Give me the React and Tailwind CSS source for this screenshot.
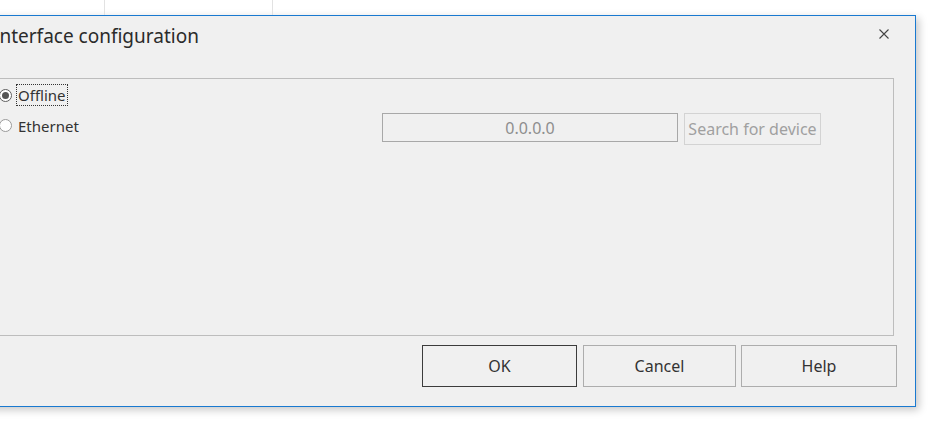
// Interface configuration dialog — Windows-style modal, partly off the left edge
import React, { useState } from "react";

const Radio = ({ checked }) => (
  <span
    className={`flex h-[13px] w-[13px] flex-none items-center justify-center rounded-full border bg-white ${
      checked ? "border-[#5f5f5f]" : "border-[#9a9a9a]"
    }`}
  >
    {checked && <span className="h-[7px] w-[7px] rounded-full bg-[#555555]" />}
  </span>
);

const DialogButton = ({ label, className, primary }) => (
  <button
    className={`flex h-[42px] items-center justify-center border bg-[#f0f0f0] text-[16px] text-[#333333] ${className} ${
      primary ? "border-[#3c3c3c]" : "border-[#adadad]"
    }`}
  >
    {label}
  </button>
);

export default function App() {
  const [mode, setMode] = useState("offline");

  return (
    <div className="h-[434px] w-[938px] overflow-hidden bg-white font-['Noto_Sans',sans-serif]">
      {/* grid behind the dialog */}
      <div className="flex h-[15px]">
        <div className="w-[105px] border-r border-[#e2e2e2]" />
        <div className="w-[168px] border-r border-[#e2e2e2]" />
      </div>

      <div className="-ml-[20px] flex h-[392px] w-[936px] flex-col border border-[#1979d0] bg-[#f0f0f0] shadow-[3px_3px_8px_rgba(0,0,0,0.22)]">
        <div className="flex h-[62px] items-start justify-between">
          <div className="pl-[12px] pt-[6px] text-[19px] leading-[28px] text-[#2b2b2b]">
            Interface configuration
          </div>
          <svg
            className="mr-[26px] mt-[13px]"
            width="10"
            height="10"
            viewBox="0 0 10 10"
          >
            <path d="M0.5 0.5L9.5 9.5M9.5 0.5L0.5 9.5" stroke="#444" strokeWidth="1.1" />
          </svg>
        </div>

        <div className="ml-[9px] mr-[21px] flex h-[258px] flex-col border border-[#bdbdbd] pt-[5px]">
          <div
            className="flex h-[22px] items-center pl-[8px]"
            onClick={() => setMode("offline")}
          >
            <Radio checked={mode === "offline"} />
            <span className="ml-[4px] border border-dotted border-[#333] px-[1px] text-[15px] leading-[20px] text-[#333333]">
              Offline
            </span>
          </div>

          <div className="mt-[7px] flex items-start">
            <div
              className="flex h-[25px] w-[391px] items-center pl-[8px]"
              onClick={() => setMode("ethernet")}
            >
              <Radio checked={mode === "ethernet"} />
              <span className="ml-[4px] border border-transparent px-[1px] text-[15px] leading-[20px] text-[#333333]">
                Ethernet
              </span>
            </div>
            <div className="flex h-[29px] w-[296px] items-center justify-center border border-[#a8a8a8] text-[16px] text-[#8e8e8e]">
              0.0.0.0
            </div>
            <button className="ml-[6px] flex h-[32px] w-[137px] items-center justify-center border border-[#d3d3d3] bg-[#f0f0f0] text-[16px] text-[#a0a0a0]">
              Search for device
            </button>
          </div>
        </div>

        <div className="mr-[18px] mt-[9px] flex justify-end">
          <DialogButton label="OK" className="w-[155px]" primary />
          <DialogButton label="Cancel" className="ml-[6px] w-[153px]" />
          <DialogButton label="Help" className="ml-[5px] w-[156px]" />
        </div>
      </div>
    </div>
  );
}
